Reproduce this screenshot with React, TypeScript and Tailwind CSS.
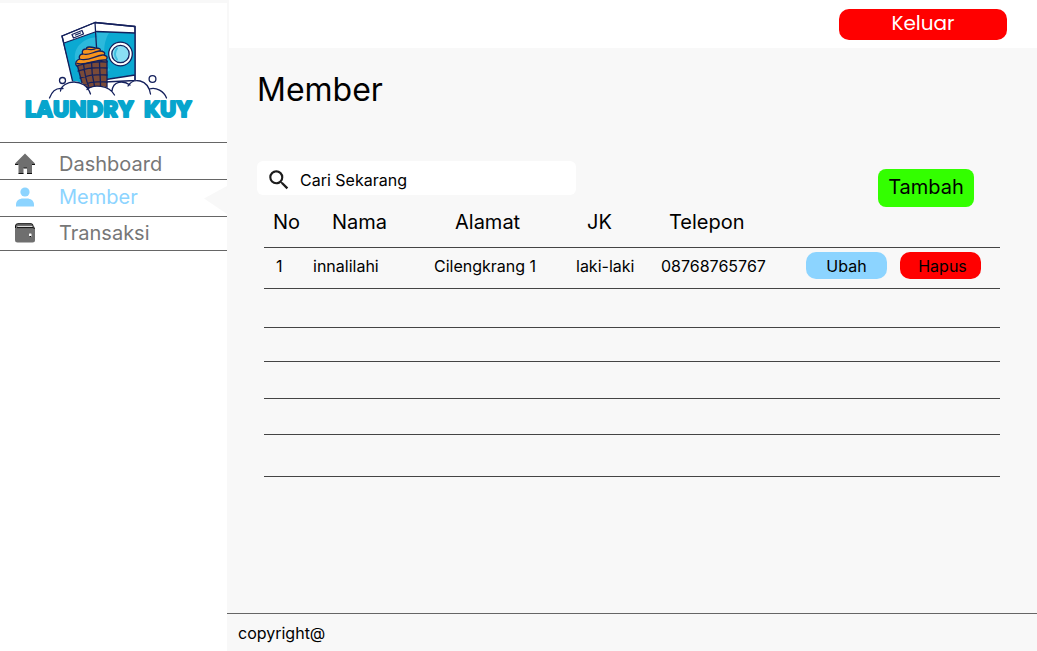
import React from "react";
import { MdSearch } from "react-icons/md";

function LaundryLogo() {
  return (
    <svg viewBox="0 0 180 106" className="h-[106px] w-[180px]" role="img" aria-label="Laundry Kuy">
      <g transform="translate(29 0)" fill="none" stroke="#14205c" strokeWidth="1.3" strokeLinejoin="round" strokeLinecap="round">
        <g transform="translate(1 0)">
          <path d="M14 16 47 2.500 87 6.500v54l-61 3z" fill="#fff" />
          <path d="M16 23 48.500 11.500 53 62 25 64z" fill="#0ba9d2" stroke="none" />
          <path d="M48.500 11.500 87 13V55L52 60z" fill="#0ba9d2" stroke="none" />
          <path d="M28 44C24 32 30 22 43 18l6-1v22z" fill="#2cb9dc" stroke="none" />
          <path d="M49 13h12c-6 9-7 27 1 37l-11 8z" fill="#2cb9dc" stroke="none" />
          <path d="m14 16 33-13.500L87 6.500v54M14 16l11 47M47 2.500l2 33M16 23l32.500-11.500L87 13M58 59.500l29-4.500" />
          <path d="m24 14.500 10-4 1.500 3.500-10 4zM27.500 15l5-2" />
          <circle cx="72.500" cy="34" r="11.800" fill="#fff" />
          <circle cx="72.500" cy="34" r="8.700" fill="#8adff4" />
          <path d="M69 28.500c-3 4-3 7 0 11" stroke="#3fbfe0" strokeWidth="2" />
          <path d="M29 44c8-2 21-4 30-3v28l-24-2z" fill="#7a4a38" />
          <path d="M35.500 44c1 8 2 15 5 22M43.500 42c0 8 1 16 3 24M51.500 41c0 8 1 17 1 25M30 51c9-3 20-4 29-3M32 58c9-3 18-4 27-3M34 65c8-3 17-4 25-3" />
          <path d="M28.500 46c-2-3 0-6 3-7-1-3 1-5 3-5-1-4 1-5 4-5-1-3 5-2 9-1 4 0 6 1 4 3 4 0 7 2 4 4 5 1 4 4 2 5 2 1 2 2 1 2-10-1-20 1-30 4z" fill="#f7941d" />
          <path d="M35 34c6 2 9-2 16-3M31.500 39c8 3 15-3 23-4M39 29c3 1 5 1 8 0M29 43.500c10 2 18-4 28-3.500" />
        </g>
        <path d="M2.500 82V78C5 71 10 67.500 14 68.500 16 60 36 57 41 70 46 64 60 65 65 71 66 61 76 60 82 65 87 57 101 60 103 69 109 67 117 71 119.500 78v4z" fill="#fff" stroke="none" />
        <path d="M2.500 78C5 71 10 67.500 16 68.500M13.500 71C15 60 38 57 43.500 74M40 69.500C46 64 62 65 67.500 75M65 71C66 61 76 60 83 65M81 66C86 57 101 59 103.500 74M102.500 69C109 67 117 71 119.500 78" />
        <circle cx="15.500" cy="60.500" r="3" fill="#fff" />
        <circle cx="105.500" cy="59" r="3.400" fill="#fff" />
      </g>
      <text y="97" fill="#07a5cd" stroke="#07a5cd" strokeWidth="2" strokeLinejoin="round" className="font-['Poppins','Inter',sans-serif] text-[23px] font-bold">
        <tspan x="7">LAUNDRY</tspan>
        <tspan x="126">KUY</tspan>
      </text>
    </svg>
  );
}

function HomeIcon() {
  return (
    <svg viewBox="0 0 20 21" className="h-[21px] w-5" aria-hidden="true">
      <path d="M10 .500 20 10.500 19 12h-2v8.500h-5V15H8.500v5.500h-5V12H1l-1-1.500z" fill="#6f6f6f" />
      <path d="M3.500 20.500h5M12 20.500h5M0 11.500h3M17 11.500h3M8.500 15H12" stroke="#111" />
    </svg>
  );
}

function PersonIcon() {
  return (
    <svg viewBox="0 0 20 20" className="h-5 w-5" fill="#8cd4ff" aria-hidden="true">
      <circle cx="10" cy="5" r="4.600" />
      <path d="M1 19.500v-2C1 13.500 4.500 11.500 8 11.500h4c3.500 0 7 2 7 6v2z" />
    </svg>
  );
}

function WalletIcon() {
  return (
    <svg viewBox="0 0 20 20" className="h-5 w-5" aria-hidden="true">
      <rect x="0" y="3" width="20" height="16.500" rx="2.500" fill="#6f6f6f" />
      <path d="M.500 5V3Q.500 .700 2.800 .700H16q2 0 2 2V4" fill="#6f6f6f" stroke="#111" />
      <path d="M2.500 3.500h15" stroke="#ddd" />
      <path d="M2 4.600h16.500l1 1.400" stroke="#111" fill="none" />
      <rect x="14" y="10.500" width="2.500" height="3" rx=".5" fill="#fff" />
      <path d="M14.500 13.500h1.500" stroke="#111" fill="none" />
    </svg>
  );
}

const menu = [
  { label: "Dashboard", Icon: HomeIcon, row: "h-9 pt-[5px]", active: false },
  { label: "Member", Icon: PersonIcon, row: "h-9 pb-0.5", active: true },
  { label: "Transaksi", Icon: WalletIcon, row: "h-[33px] pb-0.5", active: false },
];

const emptyRows = ["h-[39px]", "h-[34px]", "h-[37px]", "h-9", "h-[42px]"];

function Sidebar() {
  return (
    <aside className="w-[227px] shrink-0 border-t-[3px] border-[#f8f8f8] bg-white">
      <div className="flex h-[140px] flex-col items-center border-b border-[#666] pr-3 pt-[17px]">
        <LaundryLogo />
      </div>
      <nav>
        <ul>
          {menu.map(({ label, Icon, row, active }) => (
            <li key={label} className="relative border-b border-[#666]">
              <a href="#" aria-current={active ? "page" : undefined} className={`flex items-center gap-6 pl-[15px] text-xl leading-7 ${row} ${active ? "text-[#8cd4ff]" : "text-[#777]"}`}>
                <Icon />
                <span>{label}</span>
              </a>
              {active && <span className="absolute right-0 top-1.5 h-7 w-[23px] bg-[#f8f8f8] [clip-path:polygon(0_45%,100%_0,100%_100%)]" />}
            </li>
          ))}
        </ul>
      </nav>
    </aside>
  );
}

function MemberTable() {
  return (
    <table className="w-full table-fixed border-separate border-spacing-0 text-left text-base leading-6 [&_td]:border-b [&_td]:border-[#444] [&_th]:border-b [&_th]:border-[#444] [&_th]:align-top [&_th]:text-xl [&_th]:font-normal [&_th]:leading-7">
      <colgroup>
        <col className="w-[41px]" />
        <col className="w-[121px]" />
        <col className="w-[142px]" />
        <col className="w-[85px]" />
        <col className="w-[145px]" />
        <col />
      </colgroup>
      <thead>
        <tr className="h-10">
          <th className="pl-[9px]">No</th>
          <th className="pl-[27px]">Nama</th>
          <th className="pl-[29px]">Alamat</th>
          <th className="pl-[19px]">JK</th>
          <th className="pl-4">Telepon</th>
          <th aria-label="Aksi" />
        </tr>
      </thead>
      <tbody>
        <tr className="h-[41px] [&>td]:pb-[5px]">
          <td className="pl-3">1</td>
          <td className="pl-2">innalilahi</td>
          <td className="pl-2">Cilengkrang 1</td>
          <td className="pl-2">laki-laki</td>
          <td className="pl-2">08768765767</td>
          <td className="pl-2">
            <div className="flex gap-[13px]">
              <button type="button" className="h-[27px] w-[81px] rounded-[10px] bg-[#8cd4ff]">Ubah</button>
              <button type="button" className="h-[27px] w-[81px] rounded-[10px] bg-[#ff0000] pl-1">Hapus</button>
            </div>
          </td>
        </tr>
        {emptyRows.map((height, i) => (
          <tr key={i} className={height}>
            <td colSpan={6} />
          </tr>
        ))}
      </tbody>
    </table>
  );
}

export default function App() {
  return (
    <div className="flex min-h-screen bg-[#f8f8f8] font-['Inter',sans-serif] text-black">
      <Sidebar />
      <div className="flex min-w-0 flex-1 flex-col">
        <header className="flex h-12 justify-end border-l-2 border-[#f8f8f8] bg-white pr-[30px] pt-[9px]">
          <button type="button" className="h-[31px] w-[168px] rounded-[10px] bg-[#ff0000] pb-1 font-['Poppins','Inter',sans-serif] text-xl leading-6 text-white">
            Keluar
          </button>
        </header>
        <main className="flex-1 pl-[30px] pr-[37px] pt-[22px]">
          <h1 className="text-[32px] leading-10">Member</h1>
          <div className="mt-[51px] flex items-start justify-between pr-[26px]">
            <label className="flex h-[34px] w-[319px] items-center rounded-md bg-white pl-[9px] pt-1">
              <MdSearch className="h-[26px] w-[26px] text-[#1c1c1c]" aria-hidden="true" />
              <input type="search" aria-label="Cari Sekarang" placeholder="Cari Sekarang" className="ml-2 min-w-0 flex-1 bg-transparent text-base leading-6 outline-none placeholder:text-black" />
            </label>
            <button type="button" className="-mb-3 mt-2 h-[38px] w-24 rounded-lg bg-[#33ff00] pb-0.5 text-xl leading-7">Tambah</button>
          </div>
          <div className="pl-[7px] pt-[13px]">
            <MemberTable />
          </div>
        </main>
        <footer className="h-[38px] border-t border-[#666] pl-[11px] pt-[7px] text-base leading-6">copyright@</footer>
      </div>
    </div>
  );
}
